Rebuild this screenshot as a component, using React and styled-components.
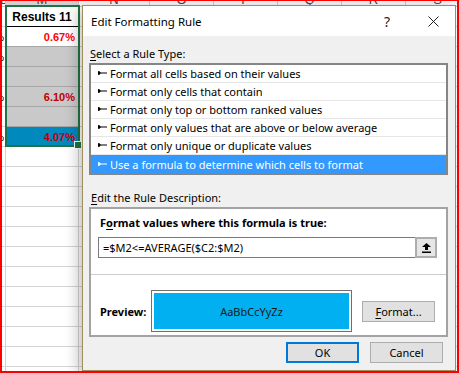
import React from "react";
import styled, { createGlobalStyle } from "styled-components";

const UI_FONT = `"Noto Sans", "Open Sans", sans-serif`;
const SHEET_FONT = `"Liberation Sans", Arial, sans-serif`;

const GlobalStyle = createGlobalStyle`
  html, body {
    margin: 0;
    padding: 0;
    background: #ffffff;
  }
`;

// Screenshot frame
const Frame = styled.div`
  position: relative;
  width: 459px;
  height: 373px;
  box-sizing: border-box;
  border: 2px solid #ff0000;
  border-top-width: 1px;
  overflow: hidden;
  background: #ffffff;
`;

// Spreadsheet behind the dialog
const Sheet = styled.div`
  display: flex;
  flex-direction: column;
  font-family: ${SHEET_FONT};
`;

const HeaderRow = styled.div`
  display: flex;
  height: 5px;
  background: #f6f6f6;
  border-bottom: 1px solid #c8c8c8;
`;

const HeaderCell = styled.div`
  flex: 0 0 ${(p) => p.$w}px;
  box-sizing: border-box;
  border-right: 1px solid #c8c8c8;
  display: flex;
  align-items: flex-end;
  justify-content: center;
  overflow: hidden;
  font-size: 13px;
  line-height: 13px;
  color: #444;
  background: ${(p) => (p.$active ? "#d2d2d2" : "transparent")};
`;

const Row = styled.div`
  display: flex;
  height: 20px;
`;

const Cell = styled.div`
  flex: 0 0 ${(p) => p.$w}px;
  box-sizing: border-box;
  height: 20px;
  display: flex;
  align-items: center;
  justify-content: ${(p) => p.$align || "flex-end"};
  padding-right: ${(p) => (p.$pad !== undefined ? p.$pad : 3)}px;
  overflow: hidden;
  white-space: nowrap;
  background: ${(p) => p.$fill || "#ffffff"};
  border-right: 1px solid #d4d4d4;
  border-bottom: 1px solid ${(p) => p.$line || "#d4d4d4"};
  font-size: ${(p) => (p.$head ? 12 : 11)}px;
  font-weight: ${(p) => (p.$bold ? 700 : 400)};
  color: ${(p) => p.$color || "#000"};
`;

const Selection = styled.div`
  position: absolute;
  left: 3px;
  top: 4px;
  width: 75px;
  height: 142px;
  box-sizing: border-box;
  border: 2px solid #217346;
  pointer-events: none;
`;

const FillHandle = styled.div`
  position: absolute;
  left: 73px;
  top: 141px;
  width: 6px;
  height: 6px;
  box-sizing: border-box;
  background: #217346;
  outline: 1px solid #ffffff;
`;

// Dialog
const Dialog = styled.div`
  position: absolute;
  left: 80px;
  top: 4px;
  width: 374px;
  height: 366px;
  box-sizing: border-box;
  border: 1px solid #a08d5e;
  background: #f0f0f0;
  box-shadow: -5px 3px 12px rgba(0, 0, 0, 0.22);
  display: flex;
  flex-direction: column;
  font-family: ${UI_FONT};
  font-size: 11px;
  color: #000;
`;

const TitleBar = styled.div`
  height: 30px;
  background: #ffffff;
  display: flex;
  align-items: center;
  padding-left: 8px;
`;

const Title = styled.div`
  flex: 1;
  font-size: 11.5px;
  color: #000;
`;

const TitleButton = styled.div`
  width: 44px;
  height: 30px;
  display: flex;
  align-items: center;
  justify-content: center;
  font-size: 14px;
  color: #222;
  margin-left: ${(p) => p.$gap || 0}px;
`;

const Body = styled.div`
  flex: 1;
  display: flex;
  flex-direction: column;
  padding: 10px 7px 0 6px;
`;

const Label = styled.div`
  height: 16px;
  line-height: 16px;
  padding-left: ${(p) => p.$indent || 1}px;
  margin-top: ${(p) => p.$top || 0}px;
  margin-bottom: 1px;
  font-weight: ${(p) => (p.$bold ? 700 : 400)};
  white-space: nowrap;

  u {
    text-decoration-thickness: 1px;
    text-underline-offset: 2px;
  }
`;

const ListBox = styled.div`
  height: 112px;
  box-sizing: border-box;
  border: 2px solid #858585;
  background: #ffffff;
  display: flex;
  flex-direction: column;
`;

const ListItem = styled.div`
  height: 18px;
  box-sizing: border-box;
  display: flex;
  align-items: center;
  gap: 3px;
  padding-left: 7px;
  white-space: nowrap;
  border-bottom: ${(p) => (p.$last ? "none" : "1px solid #e6e6e6")};
  background: ${(p) => (p.$selected ? "#3399ff" : "#ffffff")};
  color: ${(p) => (p.$selected ? "#ffffff" : "#000000")};
`;

const DescBox = styled.div`
  height: 130px;
  box-sizing: border-box;
  border: 2px solid #a3a3a3;
  background: #ffffff;
  display: flex;
  flex-direction: column;
  padding: 6px 9px 0 7px;
`;

const FormulaRow = styled.div`
  display: flex;
  height: 21px;
  margin-top: 5px;
`;

const FormulaInput = styled.div`
  flex: 1;
  box-sizing: border-box;
  border: 1px solid #7a7a7a;
  border-right: none;
  display: flex;
  align-items: center;
  padding-left: 4px;
  white-space: nowrap;
`;

const CollapseButton = styled.div`
  width: 22px;
  box-sizing: border-box;
  border: 2px solid #adadad;
  background: #e6e6e6;
  display: flex;
  align-items: center;
  justify-content: center;
`;

const Divider = styled.div`
  height: 1px;
  background: #cccccc;
  margin: 16px -9px 0 -7px;
`;

const PreviewRow = styled.div`
  display: flex;
  align-items: center;
  margin-top: 15px;
`;

const PreviewLabel = styled.div`
  width: 53px;
  padding-left: 2px;
  box-sizing: border-box;
  font-weight: 700;
`;

const PreviewFrame = styled.div`
  width: 201px;
  height: 42px;
  box-sizing: border-box;
  border: 1px solid #707070;
  padding: 2px;
  background: #ffffff;
`;

const PreviewSwatch = styled.div`
  height: 100%;
  background: #00b0f0;
  display: flex;
  align-items: center;
  justify-content: center;
  color: #1a1a1a;
`;

const Button = styled.div`
  width: ${(p) => p.$w || 73}px;
  height: 21px;
  box-sizing: border-box;
  border: ${(p) => (p.$default ? "2px solid #0078d7" : "1px solid #adadad")};
  background: #e1e1e1;
  display: flex;
  align-items: center;
  justify-content: center;
  margin-left: ${(p) => p.$ml || 0}px;

  u {
    text-underline-offset: 2px;
  }
`;

const ButtonBar = styled.div`
  display: flex;
  justify-content: flex-end;
  gap: 11px;
  margin-top: 5px;
  padding-right: 5px;
`;

const columns = [4, 73, 71, 64, 64, 64, 64, 64];
const headers = ["L", "M", "N", "O", "P", "Q", "R", "S"];

const dataRows = [
  { a: "%", v: "0.67%", fill: "#ffffff", color: "#ff0000", line: "#a6a6a6" },
  { a: "%", v: "", fill: "#c9c9c9", line: "#a6a6a6" },
  { a: "", v: "", fill: "#c9c9c9", line: "#a6a6a6" },
  { a: "%", v: "6.10%", fill: "#c9c9c9", color: "#c00000", line: "#a6a6a6" },
  { a: "", v: "", fill: "#c9c9c9", line: "#a6a6a6" },
  { a: "%", v: "4.07%", fill: "#0089bd", color: "#c00000", line: "#a6a6a6" },
];

const ruleTypes = [
  "Format all cells based on their values",
  "Format only cells that contain",
  "Format only top or bottom ranked values",
  "Format only values that are above or below average",
  "Format only unique or duplicate values",
  "Use a formula to determine which cells to format",
];

const RuleGlyph = ({ color }) => (
  <svg width="9" height="5" viewBox="0 0 9 5">
    <polygon points="0,0 3,1.5 9,1.5 9,2.5 3,2.5 0,4" fill={color} />
    <rect x="0" y="0.5" width="2" height="3" fill={color} />
  </svg>
);

const CloseIcon = () => (
  <svg width="11" height="11" viewBox="0 0 11 11">
    <path d="M0.5 0.5 L10.5 10.5 M10.5 0.5 L0.5 10.5" stroke="#222" strokeWidth="1" />
  </svg>
);

const UploadIcon = () => (
  <svg width="9" height="10" viewBox="0 0 9 10">
    <polygon points="4.5,0 9,4 6,4 6,7 3,7 3,4 0,4" fill="#000" />
    <rect x="0" y="8.5" width="9" height="1.5" fill="#000" />
  </svg>
);

const App = () => {
  const emptyRows = Array.from({ length: 12 });

  return (
    <>
      <GlobalStyle />
      <Frame>
        <Sheet>
          <HeaderRow>
            {columns.map((w, i) => (
              <HeaderCell key={i} $w={w} $active={i === 1}>
                {headers[i]}
              </HeaderCell>
            ))}
          </HeaderRow>
          <Row>
            {columns.map((w, i) =>
              i === 1 ? (
                <Cell key={i} $w={w} $align="center" $pad={0} $bold $head $line="#000000">
                  Results 11
                </Cell>
              ) : (
                <Cell key={i} $w={w} />
              )
            )}
          </Row>
          {dataRows.map((r, ri) => (
            <Row key={ri}>
              {columns.map((w, i) => {
                if (i === 0)
                  return (
                    <Cell key={i} $w={w} $pad={1}>
                      {r.a}
                    </Cell>
                  );
                if (i === 1)
                  return (
                    <Cell key={i} $w={w} $fill={r.fill} $line={r.line} $color={r.color} $bold>
                      {r.v}
                    </Cell>
                  );
                return <Cell key={i} $w={w} />;
              })}
            </Row>
          ))}
          {emptyRows.map((_, ri) => (
            <Row key={`e${ri}`}>
              {columns.map((w, i) => (
                <Cell key={i} $w={w} />
              ))}
            </Row>
          ))}
        </Sheet>

        <Selection />
        <FillHandle />

        <Dialog>
          <TitleBar>
            <Title>Edit Formatting Rule</Title>
            <TitleButton>?</TitleButton>
            <TitleButton $gap={2}>
              <CloseIcon />
            </TitleButton>
          </TitleBar>
          <Body>
            <Label $indent={1}>
              <u>S</u>elect a Rule Type:
            </Label>
            <ListBox>
              {ruleTypes.map((t, i) => {
                const selected = i === ruleTypes.length - 1;
                return (
                  <ListItem key={t} $selected={selected} $last={selected}>
                    <RuleGlyph color={selected ? "#ffffff" : "#000000"} />
                    {t}
                  </ListItem>
                );
              })}
            </ListBox>

            <Label $indent={2} $top={15}>
              <u>E</u>dit the Rule Description:
            </Label>
            <DescBox>
              <Label $indent={2} $bold>
                F<u>o</u>rmat values where this formula is true:
              </Label>
              <FormulaRow>
                <FormulaInput>=$M2&lt;=AVERAGE($C2:$M2)</FormulaInput>
                <CollapseButton>
                  <UploadIcon />
                </CollapseButton>
              </FormulaRow>
              <Divider />
              <PreviewRow>
                <PreviewLabel>Preview:</PreviewLabel>
                <PreviewFrame>
                  <PreviewSwatch>AaBbCcYyZz</PreviewSwatch>
                </PreviewFrame>
                <Button $ml={10}>
                  <span>
                    <u>F</u>ormat...
                  </span>
                </Button>
              </PreviewRow>
            </DescBox>
            <ButtonBar>
              <Button $default>OK</Button>
              <Button>Cancel</Button>
            </ButtonBar>
          </Body>
        </Dialog>
      </Frame>
    </>
  );
};

export default App;
